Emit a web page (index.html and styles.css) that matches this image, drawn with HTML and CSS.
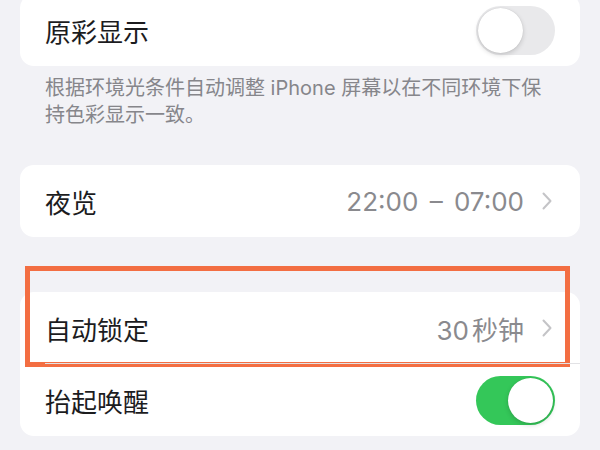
FILE: index.html
```html
<!DOCTYPE html>
<html lang="zh-CN">
<head>
    <meta charset="UTF-8">
    <meta name="viewport" content="width=device-width, initial-scale=1.0">
    <title>显示与亮度</title>
    <link rel="stylesheet" href="styles.css">
</head>
<body>
    <div class="page">
        <div class="card card-first">
            <div class="row">
                <span class="label">原彩显示</span>
                <span class="switch"><span class="knob"></span></span>
            </div>
        </div>
        <p class="note">根据环境光条件自动调整 iPhone 屏幕以在不同环境下保持色彩显示一致。</p>

        <div class="card card-night">
            <div class="row">
                <span class="label">夜览</span>
                <span class="value value-range">22:00 – 07:00</span>
                <svg class="chevron" width="10" height="18" viewBox="0 0 10 18">
                    <polyline points="1.5,1.5 8.5,9 1.5,16.5" fill="none" stroke="#c4c4c7" stroke-width="2" stroke-linecap="round" stroke-linejoin="round"/>
                </svg>
            </div>
        </div>

        <div class="card card-lock">
            <div class="row row-divided">
                <span class="label">自动锁定</span>
                <span class="value">30<span class="unit">秒钟</span></span>
                <svg class="chevron" width="10" height="18" viewBox="0 0 10 18">
                    <polyline points="1.5,1.5 8.5,9 1.5,16.5" fill="none" stroke="#c4c4c7" stroke-width="2" stroke-linecap="round" stroke-linejoin="round"/>
                </svg>
                <div class="highlight"></div>
            </div>
            <div class="row">
                <span class="label">抬起唤醒</span>
                <span class="switch on"><span class="knob"></span></span>
            </div>
        </div>
    </div>
</body>
</html>
```

FILE: styles.css
```css
body {
    margin: 0;
    background-color: #f2f2f6;
    font-family: Inter, "Noto Sans CJK SC", sans-serif;
    color: #1c1c1e;
}
.page {
    padding: 0 20px;
}
.card {
    background-color: #fff;
    border-radius: 14px;
}
.card-first {
    margin-top: -6px;
}
.card-night {
    margin-top: 36px;
}
.card-lock {
    margin-top: 55px;
}
.row {
    position: relative;
    display: flex;
    align-items: center;
    height: 72px;
    padding: 0 28px 0 25px;
}
.row-divided::after {
    content: "";
    position: absolute;
    left: 25px;
    right: 0;
    bottom: 0;
    height: 1px;
    background-color: #e2e2e5;
}
.label {
    flex: 1;
    font-size: 26px;
}
.value {
    font-size: 26px;
    color: #8a8a8e;
    margin-right: 18px;
}
.value-range {
    word-spacing: 4px;
}
.unit {
    margin-left: 3px;
}
.chevron {
    display: block;
}
.switch {
    position: relative;
    width: 79px;
    height: 49px;
    margin-right: -3px;
    border-radius: 25px;
    background-color: #e9e9eb;
}
.switch .knob {
    position: absolute;
    top: 2px;
    left: 2px;
    width: 45px;
    height: 45px;
    border-radius: 50%;
    background-color: #fff;
    box-shadow: 0 2px 5px rgba(0, 0, 0, 0.16), 0 0 1px rgba(0, 0, 0, 0.15);
}
.switch.on {
    background-color: #34c759;
}
.switch.on .knob {
    left: 32px;
}
.note {
    margin: 0;
    padding: 9px 30px 0 25px;
    font-size: 20px;
    line-height: 27px;
    color: #86868b;
}
.highlight {
    position: absolute;
    top: -26px;
    left: 5px;
    right: 10px;
    bottom: -3px;
    border: 5px solid #f36e42;
}
```
